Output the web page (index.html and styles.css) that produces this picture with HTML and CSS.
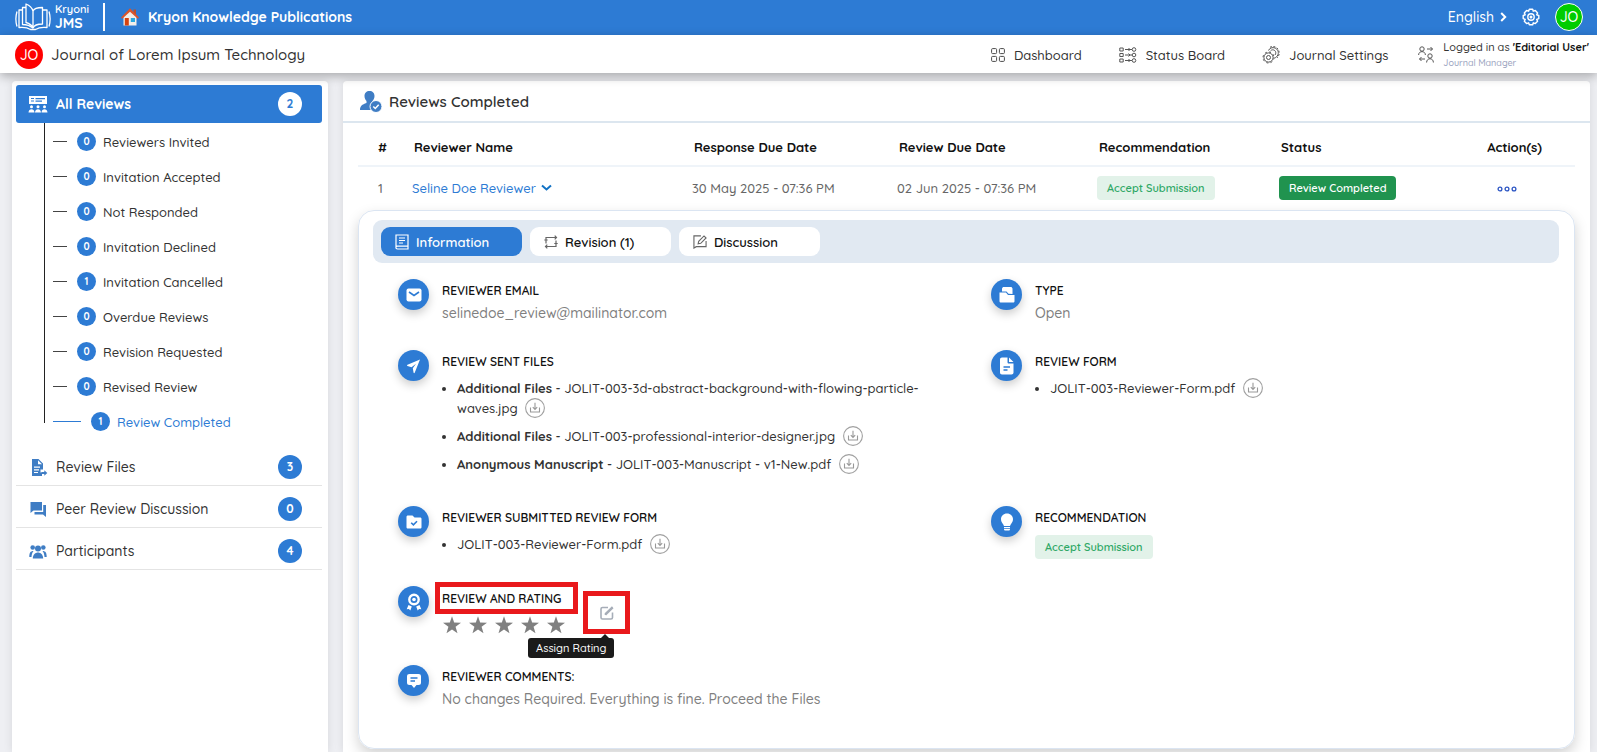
FILE: index.html
```
<!DOCTYPE html>
<html lang="en">
<head>
    <meta charset="UTF-8">
    <meta name="viewport" content="width=device-width, initial-scale=1.0">
    <title>Reviews Completed - Kryoni JMS</title>
    <link rel="stylesheet" href="styles.css">
</head>
<body>
    <!-- shared icons -->
    <svg class="sprite" aria-hidden="true">
        <symbol id="download" viewBox="0 0 20 20">
            <circle cx="10" cy="10" r="9.4" fill="none" stroke="#a0a0a0" stroke-width="1.100"/>
            <path d="M10 4.800v6.500M7.800 9.200l2.200 2.200 2.200-2.200M5.500 9.500v4.500h9v-4.500" fill="none" stroke="#999" stroke-width="1.100"/>
        </symbol>
        <symbol id="star" viewBox="0 0 24 24">
            <path d="M12 1.500l2.600 7.600 8.200.1-6.500 4.900 2.300 7.800L12 17.300l-6.600 4.600 2.300-7.800-6.500-4.900 8.200-.1z" fill="#808080"/>
        </symbol>
    </svg>

    <header class="topbar">
        <a class="logo" href="#">
            <svg width="36" height="28" viewBox="0 0 36 28" fill="none" stroke="#fff" stroke-width="1.300" stroke-linejoin="round">
                <path d="M18 25V8c-1-3.500-3-5.500-7-7v18.500c4 1 6 3 7 5.500z"/>
                <path d="M18 25c1-2.500 4.500-4 9.500-4V4.500C23 4.500 19 5.500 18 8"/>
                <path d="M11 4.500H7.500V21.500c4 0 7.500 1 10.500 3.500"/>
                <path d="M7.500 7H4v17.500c5-.5 8.500 0 11.500 2h5c3-2 6.500-2.500 11.500-2V7h-4.500"/>
                <path d="M2 8.500c-1.500 5-1.500 10 0 15M34 8.500c1.500 5 1.500 10 0 15"/>
            </svg>
            <span class="logo-text">Kryoni<b>JMS</b></span>
        </a>
        <span class="divider"></span>
        <a class="publisher" href="#">
            <svg width="18" height="18" viewBox="0 0 18 18">
                <path d="M12.500 1.500h2.500v5h-2.500z" fill="#b9502c"/>
                <path d="M2.500 8.500L9 2.500l6.500 6V17.500h-13z" fill="#f3eee9"/>
                <path d="M0 9.500L9 .3l9 9.200-1.200 1.300L9 3.800 1.200 10.800z" fill="#d9542b"/>
                <path d="M3.800 10h4v7.500h-4z" fill="#d6420f"/>
                <path d="M9.800 10h4.200v4H9.800z" fill="#2aa9e0"/>
            </svg>
            Kryon Knowledge Publications
        </a>
        <div class="topbar-right">
            <button class="language" type="button">English
                <svg width="7" height="10" viewBox="0 0 7 10"><path d="M1.200 1l4 4-4 4" fill="none" stroke="#fff" stroke-width="2"/></svg>
            </button>
            <button class="icon-button" type="button" aria-label="Settings">
                <svg width="18" height="18" viewBox="0 0 18 18" fill="none" stroke="#fff" stroke-width="1.400" stroke-linejoin="round">
                    <path d="M7.300 1.200h3.400l.6 2 2-.7 2.300 2.400-.9 1.900 2.100.7v3.100l-2.100.8.900 1.900-2.300 2.300-2-.8-.6 2H7.300l-.7-2-2 .8-2.300-2.300.9-1.900-2-.8V7.500l2-.7-.9-1.900 2.300-2.400 2 .7z"/>
                    <circle cx="9" cy="9" r="3.200"/>
                    <circle cx="9" cy="9" r=".8"/>
                </svg>
            </button>
            <span class="avatar avatar-user">JO</span>
        </div>
    </header>

    <nav class="journalbar">
        <span class="avatar avatar-journal">JO</span>
        <h1>Journal of Lorem Ipsum Technology</h1>
        <div class="menu">
            <a href="#">
                <svg width="14" height="14" viewBox="0 0 14 14" fill="none" stroke="#4a4a4a">
                    <rect x=".6" y=".6" width="5" height="5" rx="1"/><rect x="8.400" y=".6" width="5" height="5" rx="1"/>
                    <rect x=".6" y="8.400" width="5" height="5" rx="1"/><rect x="8.400" y="8.400" width="5" height="5" rx="1"/>
                </svg>
                Dashboard
            </a>
            <a href="#">
                <svg width="18" height="16" viewBox="0 0 18 16" fill="none" stroke="#555">
                    <path d="M.8 1h3.400v3H.8zM.8 6.500h3.400v3H.8zM.8 12h3.400v3H.8zM6 2.500h7M6 8h7M6 13.500h7M9.500 1l1.500 1.500L9.500 4M9.500 6.500L11 8 9.500 9.500M9.500 12l1.500 1.500L9.500 15"/>
                    <circle cx="15" cy="2.500" r="1.800"/><circle cx="15" cy="8" r="1.800"/><circle cx="15" cy="13.500" r="1.800"/>
                </svg>
                Status Board
            </a>
            <a href="#">
                <svg width="18" height="18" viewBox="0 0 18 18" fill="none" stroke="#555">
                    <circle cx="6.500" cy="11.500" r="4.600"/><circle cx="6.500" cy="11.500" r="2"/>
                    <circle cx="6.500" cy="11.500" r="5.500" stroke-dasharray="2 2.300"/>
                    <path d="M6.500 4.500c1-2.500 4-3.500 6.500-2.500s4 4 3 6.500-2 3-3.500 3.500M8.500 5c1-1.500 3-1.500 4.200-.5s1.500 3 .3 4.500"/>
                    <path d="M8 1.200c3-1.500 7-.5 8.500 2.800s.5 6-1.500 8" stroke-dasharray="2 1.500"/>
                </svg>
                Journal Settings
            </a>
            <a class="login" href="#">
                <svg width="16" height="17" viewBox="0 0 16 17" fill="none" stroke="#555">
                    <circle cx="4" cy="3" r="2.200"/><path d="M.6 9c0-4.500 6.800-4.500 6.800 0M9 3h5.500M12.500 1l2 2-2 2"/>
                    <circle cx="12" cy="10" r="2.200"/><path d="M8.600 16.500c0-5 6.800-5 6.800 0M7 13H1.500M3.500 11l-2 2 2 2"/>
                </svg>
                <span>Logged in as <b>'Editorial User'</b><small>Journal Manager</small></span>
            </a>
        </div>
    </nav>

    <div class="page">
        <aside class="sidebar">
            <a class="side-row side-active" href="#">
                <svg width="20" height="17" viewBox="0 0 20 17" fill="#fff">
                    <path fill-rule="evenodd" d="M1 0h18v8H1zM3 2v1h3V2zM7.500 2v1.200H17V2zM7.500 4.500v1.200H14V4.500zM3 4.500v1h3v-1z"/>
                    <circle cx="3.500" cy="10.800" r="1.500"/><circle cx="10" cy="10.800" r="1.500"/><circle cx="16.500" cy="10.800" r="1.500"/>
                    <path d="M.5 16.500c0-4.500 6-4.500 6 0zM7 16.500c0-4.500 6-4.500 6 0zM13.500 16.500c0-4.500 6-4.500 6 0z"/>
                </svg>
                All Reviews <span class="count">2</span>
            </a>
            <ul class="tree">
                <li><a href="#"><span class="badge">0</span>Reviewers Invited</a></li>
                <li><a href="#"><span class="badge">0</span>Invitation Accepted</a></li>
                <li><a href="#"><span class="badge">0</span>Not Responded</a></li>
                <li><a href="#"><span class="badge">0</span>Invitation Declined</a></li>
                <li><a href="#"><span class="badge">1</span>Invitation Cancelled</a></li>
                <li><a href="#"><span class="badge">0</span>Overdue Reviews</a></li>
                <li><a href="#"><span class="badge">0</span>Revision Requested</a></li>
                <li><a href="#"><span class="badge">0</span>Revised Review</a></li>
                <li class="current"><a href="#"><span class="badge">1</span>Review Completed</a></li>
            </ul>
            <a class="side-row" href="#">
                <svg width="20" height="17" viewBox="0 0 20 17" fill="#3f7dc4">
                    <path fill-rule="evenodd" d="M4 0h6.500l4.500 4.500v6h-2.500v3h1.500V17H4zM10 1.200V5.200h4zM6 7.500v1.200h6V7.500zM6 10.200v1.200h5v-1.200zM6 13v1.100h4V13z"/>
                    <path d="M13.500 13h2.800v-1.800l3 2.800-3 2.700V15h-2.800z"/>
                </svg>
                Review Files <span class="count">3</span>
            </a>
            <a class="side-row" href="#">
                <svg width="20" height="17" viewBox="0 0 20 17" fill="#3f7dc4">
                    <path d="M2.500 1h11.500v8.500H5.500L2.500 12zM15.200 4H18v12l-3-2.500H6.500V11h8.700z"/>
                </svg>
                Peer Review Discussion <span class="count">0</span>
            </a>
            <a class="side-row" href="#">
                <svg width="20" height="17" viewBox="0 0 18 17" fill="#3f7dc4">
                    <circle cx="9" cy="5.500" r="3"/><circle cx="3.700" cy="4.500" r="2.300"/><circle cx="14.300" cy="4.500" r="2.300"/>
                    <path d="M3.800 15.500C4 7.500 14 7.500 14.200 15.500zM.3 14c0-4 .9-6 4.200-6-1.300 1.500-1.900 4-2 6zM17.700 14c0-4-.9-6-4.200-6 1.300 1.500 1.900 4 2 6z"/>
                </svg>
                Participants <span class="count">4</span>
            </a>
        </aside>

        <main class="content">
            <div class="content-head">
                <svg width="22" height="22" viewBox="0 0 22 22">
                    <path d="M9.500 0c3 0 5 2 5 5 0 2-.8 3.600-2 5v2l4 1.500V19H0c0-4 2-5.500 6.500-7v-2c-1.200-1.400-2-3-2-5 0-3 2-5 5-5z" fill="#3f7dc4"/>
                    <circle cx="16" cy="15.500" r="6" fill="#3f7dc4" stroke="#fff"/>
                    <path d="M13.300 15.500l2 2 3.400-3.700" fill="none" stroke="#fff" stroke-width="1.500"/>
                </svg>
                <h2>Reviews Completed</h2>
            </div>

            <div class="content-body">
                <table class="reviews">
                    <thead>
                        <tr>
                            <th class="col-num">#</th>
                            <th class="col-name">Reviewer Name</th>
                            <th class="col-response">Response Due Date</th>
                            <th class="col-due">Review Due Date</th>
                            <th class="col-rec">Recommendation</th>
                            <th class="col-status">Status</th>
                            <th class="col-action">Action(s)</th>
                        </tr>
                    </thead>
                    <tbody>
                        <tr>
                            <td class="col-num">1</td>
                            <td><a class="reviewer" href="#">Seline Doe Reviewer
                                <svg width="11" height="8" viewBox="0 0 11 8"><path d="M1 1.500l4.500 4 4.500-4" fill="none" stroke="#1272c4" stroke-width="2"/></svg>
                            </a></td>
                            <td>30 May 2025 - 07:36 PM</td>
                            <td>02 Jun 2025 - 07:36 PM</td>
                            <td><span class="pill pill-light">Accept Submission</span></td>
                            <td><span class="pill pill-green">Review Completed</span></td>
                            <td class="col-action">
                                <button class="icon-button" type="button" aria-label="Actions">
                                    <svg width="20" height="6" viewBox="0 0 20 6" fill="none" stroke="#2d56c4" stroke-width="1.300"><circle cx="3" cy="3" r="1.900"/><circle cx="10" cy="3" r="1.900"/><circle cx="17" cy="3" r="1.900"/></svg>
                                </button>
                            </td>
                        </tr>
                    </tbody>
                </table>

                <section class="panel">
                    <div class="tabs">
                        <button class="tab tab-active" type="button">
                            <svg width="14" height="16" viewBox="0 0 14 16" fill="none" stroke="#fff" stroke-width="1.200"><path d="M13 12.200H2.500C.3 12.200.3 15 2.500 15H13V1H1v12.500M4 4h6M4 6.500h6M4 9h4"/></svg>
                            Information
                        </button>
                        <button class="tab" type="button">
                            <svg width="14" height="14" viewBox="0 0 14 14" fill="none" stroke="#666" stroke-width="1.200"><path d="M2 8.500V2.500h10M10.700.7l1.800 1.800-1.800 1.800M12 5.500v6H2M3.300 9.700l-1.800 1.800 1.800 1.800M.3 5h3.400M10.300 8.500h3.400"/></svg>
                            Revision (1)
                        </button>
                        <button class="tab" type="button">
                            <svg width="14" height="14" viewBox="0 0 15 15" fill="none" stroke="#666" stroke-width="1.200"><path d="M8.500 1H1v13l2.500-1.500H14V6.500M5.500 9.500l.6-2.800L11.800 1l2.200 2.200-5.700 5.700z"/></svg>
                            Discussion
                        </button>
                    </div>

                    <div class="details">
                        <div class="detail">
                            <span class="circle">
                                <svg width="18" height="18" viewBox="0 0 18 18"><rect x="1.500" y="2.500" width="15" height="13" rx="2" fill="#fff"/><path d="M4 6l5 3.500L14 6" fill="none" stroke="#2d7bd4" stroke-width="1.600"/></svg>
                            </span>
                            <div class="detail-text">
                                <h3>REVIEWER EMAIL</h3>
                                <p>selinedoe_review@mailinator.com</p>
                            </div>
                        </div>
                        <div class="detail">
                            <span class="circle">
                                <svg width="18" height="18" viewBox="0 0 18 18" fill="#fff"><path d="M4 2.500L5 1h8.500l1 1.500v5.500l-4-.3L8.500 5.500H4zM1.500 6.500h6.500l2 2.500h6.500v6c0 1-.5 1.500-1.500 1.500H3c-1 0-1.500-.5-1.500-1.500z"/></svg>
                            </span>
                            <div class="detail-text">
                                <h3>TYPE</h3>
                                <p>Open</p>
                            </div>
                        </div>

                        <div class="detail">
                            <span class="circle">
                                <svg width="18" height="18" viewBox="0 0 18 18"><path d="M15 2.500L2.500 7.800c-.6.3-.6.900 0 1.100l4 1.300L11 6.800l-3.200 4.500.8 4.400c.2.600.8.600 1.100 0z" fill="#fff"/></svg>
                            </span>
                            <div class="detail-text">
                                <h3>REVIEW SENT FILES</h3>
                                <ul class="files">
                                    <li><b>Additional Files</b> - JOLIT-003-3d-abstract-background-with-flowing-particle-waves.jpg <a href="#" aria-label="Download"><svg class="download"><use href="#download"/></svg></a></li>
                                    <li><b>Additional Files</b> - JOLIT-003-professional-interior-designer.jpg <a href="#" aria-label="Download"><svg class="download"><use href="#download"/></svg></a></li>
                                    <li><b>Anonymous Manuscript</b> - JOLIT-003-Manuscript - v1-New.pdf <a href="#" aria-label="Download"><svg class="download"><use href="#download"/></svg></a></li>
                                </ul>
                            </div>
                        </div>
                        <div class="detail">
                            <span class="circle">
                                <svg width="18" height="18" viewBox="0 0 18 18"><path d="M4 .5h5.500v4.700c0 .8.500 1.300 1.300 1.300H15.500v9c0 1.200-.8 2-2 2H4c-1.200 0-2-.8-2-2v-13c0-1.200.8-2 2-2zM11 .5l4.500 4.500H11z" fill="#fff"/><path d="M5.500 10h6.500M5.500 13h4" stroke="#2d7bd4" stroke-width="1.500"/></svg>
                            </span>
                            <div class="detail-text">
                                <h3>REVIEW FORM</h3>
                                <ul class="files">
                                    <li>JOLIT-003-Reviewer-Form.pdf <a href="#" aria-label="Download"><svg class="download"><use href="#download"/></svg></a></li>
                                </ul>
                            </div>
                        </div>

                        <div class="detail">
                            <span class="circle">
                                <svg width="18" height="18" viewBox="0 0 18 18"><path d="M3 2.500h4.500l2 2H15c1 0 1.500.5 1.500 1.500v8c0 1-.5 1.500-1.500 1.500H3c-1 0-1.500-.5-1.500-1.500V4c0-1 .5-1.500 1.500-1.500z" fill="#fff"/><path d="M6.200 9.700l2.200 2.200L12 8.200" fill="none" stroke="#2d7bd4" stroke-width="1.600"/></svg>
                            </span>
                            <div class="detail-text">
                                <h3>REVIEWER SUBMITTED REVIEW FORM</h3>
                                <ul class="files">
                                    <li>JOLIT-003-Reviewer-Form.pdf <a href="#" aria-label="Download"><svg class="download"><use href="#download"/></svg></a></li>
                                </ul>
                            </div>
                        </div>
                        <div class="detail">
                            <span class="circle">
                                <svg width="18" height="18" viewBox="0 0 18 18" fill="#fff"><path d="M9 .5c3.500 0 6 2.500 6 5.800 0 2.700-1.500 3.700-2.300 5.200-.4.700-.5 1.500-.7 1.500H6c-.2 0-.3-.8-.7-1.500C4.500 10 3 9 3 6.300 3 3 5.500.5 9 .5zM6 14h6v1.200H6zM6 16h6c0 1-.5 1.500-1.500 1.500h-3C6.500 17.500 6 17 6 16z"/></svg>
                            </span>
                            <div class="detail-text">
                                <h3>RECOMMENDATION</h3>
                                <span class="pill pill-light">Accept Submission</span>
                            </div>
                        </div>

                        <div class="detail detail-wide">
                            <span class="circle">
                                <svg width="18" height="18" viewBox="0 0 18 18"><circle cx="9" cy="6.500" r="4.700" fill="none" stroke="#fff" stroke-width="2.400"/><circle cx="9" cy="6.500" r="1.800" fill="#fff"/><path d="M3.500 12l3.300 1.500-1.500 4-1.400-1.500-2.200.2zM14.500 12l-3.300 1.500 1.500 4 1.400-1.500 2.200.2z" fill="#fff"/></svg>
                            </span>
                            <div class="detail-text rating">
                                <div>
                                    <h3 class="marked">REVIEW AND RATING</h3>
                                    <div class="stars" role="img" aria-label="No rating yet">
                                        <svg><use href="#star"/></svg>
                                        <svg><use href="#star"/></svg>
                                        <svg><use href="#star"/></svg>
                                        <svg><use href="#star"/></svg>
                                        <svg><use href="#star"/></svg>
                                    </div>
                                </div>
                                <div class="assign">
                                    <button class="assign-button" type="button" aria-label="Edit rating" aria-describedby="assign-tip">
                                        <svg width="14" height="14" viewBox="0 0 14 14" fill="none" stroke="#a6adb8" stroke-width="1.600"><path d="M8 1.500H2.500c-1 0-1.500.5-1.500 1.500v8.500c0 1 .5 1.500 1.500 1.500H11c1 0 1.500-.5 1.500-1.500V6.500M5.500 9V7.500L12.500.8M5.500 8.800L13 1.600"/></svg>
                                    </button>
                                    <span class="tooltip" id="assign-tip" role="tooltip">Assign Rating</span>
                                </div>
                            </div>
                        </div>

                        <div class="detail detail-wide">
                            <span class="circle">
                                <svg width="18" height="18" viewBox="0 0 18 18"><path d="M4.500 2h9c1.700 0 2.500.8 2.500 2.500v6c0 1.700-.8 2.500-2.500 2.500h-2L9 16l-2.500-3h-2C2.800 13 2 12.200 2 10.500v-6C2 2.800 2.800 2 4.500 2z" fill="#fff"/><path d="M5.500 6h7M5.500 9h4.500" stroke="#2d7bd4" stroke-width="1.400"/></svg>
                            </span>
                            <div class="detail-text">
                                <h3>REVIEWER COMMENTS:</h3>
                                <p>No changes Required. Everything is fine. Proceed the Files</p>
                            </div>
                        </div>
                    </div>
                </section>
            </div>
        </main>
    </div>
</body>
</html>
```

FILE: styles.css
```
* {
    box-sizing: border-box;
}

body {
    margin: 0;
    min-height: 100vh;
    display: flex;
    flex-direction: column;
    background: #eeeff3;
    color: #333;
    font-family: Quicksand, Lato, sans-serif;
    font-size: 13px;
    font-weight: 500;
    line-height: 20px;
}

a {
    color: inherit;
    text-decoration: none;
}

button {
    font: inherit;
    color: inherit;
    border: none;
    background: none;
    padding: 0;
    cursor: pointer;
}

h1, h2, h3, p, ul {
    margin: 0;
    padding: 0;
}

svg {
    display: block;
    flex: none;
}

.sprite {
    position: absolute;
    width: 0;
    height: 0;
}

/* top bar */
.topbar {
    display: flex;
    align-items: center;
    height: 35px;
    padding: 0 14px 2px 15px;
    background: #2d7bd4;
    color: #fff;
}

.logo {
    display: flex;
    align-items: center;
    gap: 4px;
}

.logo-text {
    font-size: 11px;
    line-height: 13px;
    font-weight: 600;
}

.logo-text b {
    display: block;
    font-size: 14px;
    line-height: 15px;
}

.divider {
    width: 2px;
    height: 28px;
    margin: 0 16px 0 14px;
    background: #fff;
}

.publisher {
    display: flex;
    align-items: center;
    gap: 9px;
    font-weight: 700;
    font-size: 14px;
}

.topbar-right {
    display: flex;
    align-items: center;
    gap: 15px;
    margin-left: auto;
}

.language {
    display: flex;
    align-items: center;
    gap: 6px;
    font-size: 14px;
}

.avatar {
    display: flex;
    align-items: center;
    justify-content: center;
    width: 28px;
    height: 28px;
    border-radius: 50%;
    color: #fff;
    font-size: 14px;
}

.avatar-user {
    background: #0c0;
    border: 1px solid #fff;
}

.avatar-journal {
    background: #f00;
}

/* journal bar */
.journalbar {
    position: relative;
    display: flex;
    align-items: center;
    height: 38px;
    padding: 1px 8px 0 15px;
    background: #fff;
    box-shadow: 0 3px 10px rgba(0, 0, 0, 0.3);
}

.journalbar h1 {
    margin-left: 8px;
    font-size: 15px;
    font-weight: 500;
}

.menu {
    display: flex;
    align-items: center;
    gap: 37px;
    margin-left: auto;
}

.menu a {
    display: flex;
    align-items: center;
    gap: 9px;
}

.menu .login {
    margin-left: -8px;
    padding-left: 1px;
    font-size: 11px;
    line-height: 15px;
}

.login b {
    color: #111;
}

.login small {
    display: block;
    font-size: 9px;
    color: #9aa3c0;
}

/* layout */
.page {
    flex: 1;
    display: grid;
    grid-template-columns: 316px 1fr;
    gap: 15px;
    padding: 8px 7px 0 12px;
}

.sidebar,
.content {
    background: #fff;
    border-radius: 4px 4px 0 0;
    box-shadow: 0 0 10px rgba(0, 0, 0, 0.1);
}

/* sidebar */
.sidebar {
    padding: 4px 6px 0 4px;
}

.side-row {
    display: flex;
    align-items: center;
    gap: 8px;
    height: 42px;
    padding: 5px 20px 0 12px;
    border-bottom: 1px solid #e4e4e4;
    font-size: 14px;
}

.side-active {
    height: 38px;
    padding-top: 0;
    border: none;
    border-radius: 3px;
    background: #2d7bd4;
    color: #fff;
    font-weight: 700;
}

.count {
    display: flex;
    align-items: center;
    justify-content: center;
    width: 24px;
    height: 24px;
    margin-left: auto;
    border-radius: 50%;
    background: #2d7bd4;
    color: #fff;
    font-size: 12px;
    font-weight: 700;
}

.side-active .count {
    background: #fff;
    color: #2d7bd4;
}

.tree {
    height: 300px;
    margin: 0 0 21px 28px;
    padding-left: 8px;
    border-left: 1px solid #222;
    list-style: none;
}

.tree a {
    display: flex;
    align-items: center;
    height: 35px;
    padding-top: 2px;
}

.tree a::before {
    content: "";
    width: 14px;
    height: 1px;
    margin-right: 10px;
    background: #444;
}

.tree .current {
    color: #2d7bd4;
}

.tree .current a::before {
    width: 28px;
    background: #2d7bd4;
}

.badge {
    display: flex;
    align-items: center;
    justify-content: center;
    width: 19px;
    height: 19px;
    margin-right: 7px;
    border-radius: 50%;
    background: #2d7bd4;
    color: #fff;
    font-size: 10px;
    font-weight: 700;
}

/* content */
.content-head {
    display: flex;
    align-items: center;
    gap: 7px;
    height: 42px;
    padding: 1px 17px 0;
    border-bottom: 2px solid #dce6ef;
}

.content-head h2 {
    font-size: 15px;
    font-weight: 600;
}

.content-body {
    padding: 0 15px;
}

.reviews {
    width: 100%;
    border-collapse: collapse;
    table-layout: fixed;
}

.reviews th {
    height: 43px;
    padding: 6px 0 0 2px;
    border-bottom: 2px solid #eff4f9;
    color: #111;
    font-weight: 700;
    text-align: left;
}

.reviews td {
    height: 44px;
    padding: 0 0 2px;
    color: #666;
}

.reviews .col-num {
    width: 54px;
    padding-left: 20px;
}

.col-response { width: 205px; }
.col-due { width: 200px; }
.col-rec { width: 182px; }
.col-status { width: 182px; }

.reviews .col-action {
    width: 114px;
    padding-right: 22px;
    text-align: center;
}

.reviews th.col-action {
    padding-right: 33px;
    text-align: right;
}

.icon-button {
    display: inline-block;
    vertical-align: middle;
}

.reviewer {
    display: flex;
    align-items: center;
    gap: 5px;
    color: #2d7bd4;
}

.pill {
    display: inline-block;
    padding: 2px 10px;
    border-radius: 4px;
    font-size: 11px;
    font-weight: 600;
}

.pill-light {
    background: #e2f2e9;
    color: #2fa866;
}

.pill-green {
    background: #20934f;
    color: #fff;
}

.panel {
    min-height: 539px;
    padding: 9px 15px 9px 14px;
    border: 1px solid #dbe5f2;
    border-radius: 16px;
    box-shadow: 0 6px 14px rgba(0, 0, 0, 0.18);
}

.tabs {
    display: flex;
    gap: 8px;
    padding: 7px 8px;
    border-radius: 9px;
    background: #e1e9f2;
}

.tab {
    display: flex;
    align-items: center;
    gap: 7px;
    width: 141px;
    height: 29px;
    padding: 0 14px;
    border-radius: 9px;
    background: #fff;
    color: #111;
    font-weight: 600;
}

.tab-active {
    background: #2d7bd4;
    color: #fff;
}

/* reviewer details */
.details {
    display: grid;
    grid-template-columns: 1fr 1fr;
    row-gap: 27px;
    padding-top: 16px;
}

.detail {
    display: flex;
    gap: 13px;
    padding-left: 25px;
}

.detail-wide {
    grid-column: span 2;
}

.circle {
    display: flex;
    align-items: center;
    justify-content: center;
    flex: none;
    width: 31px;
    height: 31px;
    border-radius: 50%;
    background: #2d7bd4;
    box-shadow: 0 4px 10px rgba(0, 0, 0, 0.2);
}

.detail-text {
    max-width: 500px;
}

.detail h3 {
    margin: 2px 0;
    font-size: 12px;
    font-weight: 600;
    color: #111;
}

.detail p {
    color: #808080;
    font-size: 14px;
}

.detail .pill {
    margin-top: 5px;
}

.files {
    margin: 6px 0 5px;
    padding-left: 15px;
}

.files li + li {
    margin-top: 8px;
}

.files a {
    display: inline-block;
    height: 20px;
    margin-left: 4px;
    vertical-align: top;
}

.download {
    width: 20px;
    height: 20px;
}

.rating {
    display: flex;
    gap: 5px;
    padding-bottom: 3px;
}

.detail .marked {
    margin: -4px 0 1px -7px;
    padding: 2px 12px 0 2px;
    border: 5px solid #e9191c;
}

.stars {
    display: flex;
    gap: 6px;
}

.stars svg {
    width: 20px;
    height: 20px;
}

.assign {
    position: relative;
    height: 43px;
    margin-top: 5px;
}

.assign-button {
    display: flex;
    align-items: center;
    justify-content: center;
    width: 47px;
    height: 43px;
    border: 5px solid #e9191c;
}

.tooltip {
    position: absolute;
    top: 47px;
    right: 16px;
    padding: 0 8px;
    border-radius: 3px;
    background: #1a1a1a;
    color: #fff;
    font-size: 11px;
    white-space: nowrap;
}

.tooltip::before {
    content: "";
    position: absolute;
    top: -4px;
    right: 4px;
    border: 5px solid transparent;
    border-top: none;
    border-bottom-color: #1a1a1a;
}
```
